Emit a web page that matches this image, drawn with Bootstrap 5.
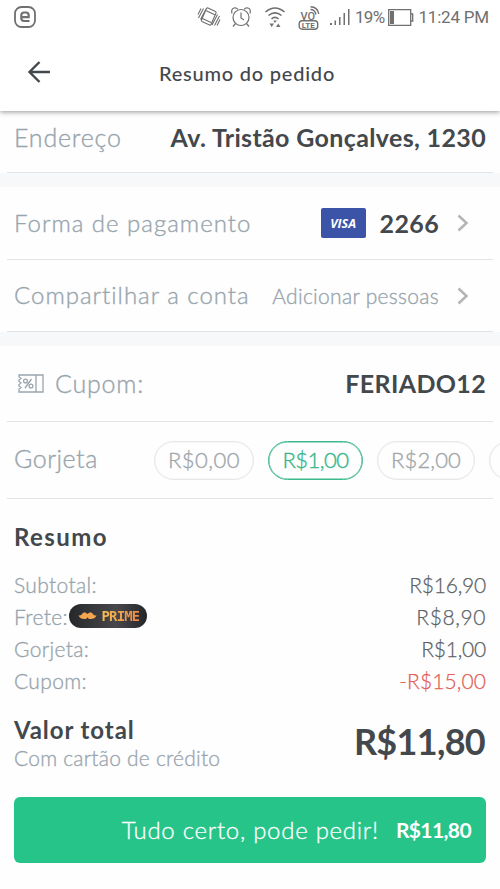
<!DOCTYPE html>
<html lang="pt-BR">
<head>
<meta charset="utf-8">
<meta name="viewport" content="width=device-width, initial-scale=1">
<title>Resumo do pedido</title>
<link href="https://cdn.jsdelivr.net/npm/bootstrap@5.3.0/dist/css/bootstrap.min.css" rel="stylesheet">
<style>
body{font-family:Lato,"Liberation Sans",sans-serif;font-weight:300;color:#43484c;background:#fefefe;line-height:1.2;height:889px}
.status-bar{height:34px;font:400 17px Roboto,sans-serif;color:#707070}
.status-bar svg{display:block;flex:none}
.title-bar{height:77px}
.top-area{background:#fff;box-shadow:0 1px 5px rgba(0,0,0,.42);position:relative;z-index:1}
.page-title{font-size:20px;font-weight:500;letter-spacing:.78px;margin-left:-6px}
.back-icon{left:27px;top:26px}
.line-row{margin:0 7px;padding:0 7px;border-bottom:1px solid #e3e4e6}
.divider-band{height:14px;background:#f7f8fa}
.label-text{font-size:25px;color:#98a5ad;letter-spacing:.8px;white-space:nowrap;-webkit-text-stroke:.35px}
.label-text.compact{font-size:24px;letter-spacing:1px}
.value-text{font-size:25px;font-weight:700;letter-spacing:.35px;white-space:nowrap}
.h-address{height:62px;padding-bottom:10px}
.h-pay{height:73px}
.h-share{height:72px}
.h-coupon{height:76px;padding-bottom:1px}
.h-tip{height:77px}
.chevron{margin:0 17px 0 18px}
.people{font-size:21px;letter-spacing:.3px;color:#98a5ad;-webkit-text-stroke:.35px}
.visa-tag{width:45px;height:30px;border-radius:2px;background:#3b54a8;color:#fff;font:italic 700 12.5px "Open Sans",sans-serif}
.tip-label{width:140px;letter-spacing:.5px;flex:none;padding-bottom:5px}
.tip-pill{height:39px;border:1.6px solid #e6e7e9;border-radius:20px;font-size:22px;color:#a0a6aa;letter-spacing:.5px;flex:none;-webkit-text-stroke:.35px;box-shadow:inset 0 0 0 .5px #eeeff0}
.tip-pill.chosen{border-color:#3dba8c;color:#35b586;letter-spacing:-.5px;box-shadow:inset 0 0 0 .5px #3dba8c}
.tip-pill.w-c{letter-spacing:.1px}
.w-a{width:100px}.w-b{width:95px}.w-c{width:98px}
.tips{gap:14px;margin-right:-14px;flex:1 1 0;min-width:0;overflow:hidden}
.sum-title{font-size:24px;font-weight:700;letter-spacing:1.4px;line-height:30px;margin-bottom:17px}
.sum-row{height:32px;font-size:21px}
.sum-row .key{color:#98a5ad;letter-spacing:.35px;-webkit-text-stroke:.35px}
.sum-row .amount{color:#5b6166;letter-spacing:-.2px;-webkit-text-stroke:.25px}
.sum-row .amount.spaced{letter-spacing:.6px}
.sum-row .amount.discount{color:#e35d55;letter-spacing:.1px}
.prime-tag{width:78px;height:24px;background:linear-gradient(90deg,#25272b,#48484a 60%,#25272b);gap:5px;margin:-2px 0 0 1.5px}
.prime-tag span{font:700 14px "DejaVu Sans Mono",monospace;letter-spacing:-.9px;background:linear-gradient(90deg,#f6bd54,#ef8746);-webkit-background-clip:text;color:transparent}
.total-name{font-size:24px;font-weight:700;letter-spacing:.92px;line-height:28px}
.pay-kind{font-size:21px;color:#9aa6b0;letter-spacing:.22px;line-height:28px;-webkit-text-stroke:.35px}
.total-sum{font-size:36px;font-weight:700;letter-spacing:-.7px;padding:0 1px 4px 0}
.confirm-btn{height:66px;margin:25px 14px 0;background:#26c489;border:0;border-radius:6px;color:#fff;font-weight:300;width:472px;padding:0 15px}
.confirm-btn:hover{background:#26c489;color:#fff}
.confirm-text{font-size:24px;letter-spacing:.72px;-webkit-text-stroke:.3px}
.confirm-sum{font-size:21px;font-weight:700;letter-spacing:-.6px;margin-left:17px}
</style>
<script src="https://cdn.jsdelivr.net/npm/bootstrap@5.3.0/dist/js/bootstrap.bundle.min.js"></script>
</head>
<body>
<header class="top-area">
  <div class="status-bar d-flex align-items-center">
    <svg style="margin-left:14px" width="22" height="22" viewBox="0 0 22 22" fill="none" stroke="#707070"><rect x="1" y="1" width="20" height="20" rx="6.5" stroke-width="1.8"/><path d="M15.500 15H10q-2.700 0-2.700-2.700V9.200q0-2.700 2.700-2.700h2q2.700 0 2.700 2.700v1.900H8" stroke-width="2.200"/></svg>
    <svg class="ms-auto" width="24" height="24" viewBox="0 0 24 24" fill="none" stroke="#707070" stroke-width="1.1"><path d="M11 3 18.500 6.600q.9.500.5 1.400L14 19.500q-.5.900-1.500.5L5 16.400q-.9-.5-.5-1.400L9.500 3.500q.5-.9 1.500-.5ZM9.300 5.800l8.500 4M5.500 13.500l8.500 4M6.500 3.500 1.500 13M4 3.500 1 9.500M17.500 20.500l5-9.500M20 20.500 23 14.500M9 4 3.500 14.500M15 20 20.500 9.500"/></svg>
    <svg style="margin-left:9px" width="22" height="22" viewBox="0 0 22 22" fill="none" stroke="#707070" stroke-width="1.2"><circle cx="11" cy="11.500" r="8"/><path d="M11 6.500v5.500l3 2M5.500 17.500 3 20.500M16.500 17.500l2.500 3M2 7.500Q.8 3 4 2q2.500-.6 4 1.500M20 7.500Q21.200 3 18 2q-2.500-.6-4 1.500"/></svg>
    <svg style="margin-left:12px" width="22" height="22" viewBox="0 0 22 22" fill="none" stroke="#707070" stroke-width="1.600"><path d="M1.500 6Q11-2 20.500 6M4.500 9.500q6.500-5.400 13 0M7.500 12.800q3.500-3 7 0"/><path fill="#707070" stroke="none" d="M9.200 14.500h3.600L11 17ZM5.500 17.500h4.500L7.700 21ZM12 21h4.500l-2.200-3.500Z"/></svg>
    <svg style="margin-left:12px" width="24" height="26" viewBox="0 0 24 26" fill="none" stroke="#707070" stroke-width="1.400"><text x="2.500" y="15.500" font-family="Roboto" font-size="11" font-weight="500" fill="#707070" stroke="none">VO</text><rect x="1.200" y="16.700" width="18.500" height="8.500" rx="3"/><text x="3.800" y="23.900" font-family="Roboto" font-size="8" font-weight="700" fill="#707070" stroke="none">LTE</text><path d="M12.500 5.500q4.500 0 5.500 5M12.500 2.800q7 .2 8.300 7"/></svg>
    <svg style="margin-left:8px" width="21" height="18" viewBox="0 0 21 18" fill="#707070"><path d="M0 15h2v2H0zM4.500 12.500h1.500V17h-1.500zM9 9h1.500v8H9zM13.500 5h1.500v12h-1.500zM18 1h1.500v16H18z"/></svg>
    <span style="margin-left:4px;letter-spacing:-.7px">19%</span>
    <svg style="margin-left:4px" width="26" height="17" viewBox="0 0 26 17"><path d="M.7.700h22v15.600H.7zM22.700 5h2v7h-2" fill="none" stroke="#707070" stroke-width="1.300"/><path d="M2 2h4v13H2z" fill="#707070"/></svg>
    <span style="margin-left:4px;margin-right:11px;letter-spacing:-.2px">11:24 PM</span>
  </div>
  <div class="title-bar position-relative d-flex align-items-center justify-content-center">
    <svg class="back-icon position-absolute" width="24" height="24" viewBox="0 0 24 24" fill="none" stroke="#43484c" stroke-width="2.400"><path d="M23 12H2.500M12.500 2l-10 10 10 10"/></svg>
    <span class="page-title">Resumo do pedido</span>
  </div>
</header>
<main>
  <div class="line-row h-address d-flex align-items-center justify-content-between"><span class="label-text">Endereço</span><span class="value-text">Av. Tristão Gonçalves, 1230</span></div>
  <div class="divider-band"></div>
  <div class="line-row h-pay d-flex align-items-center">
    <span class="label-text compact me-auto">Forma de pagamento</span>
    <span class="visa-tag d-flex align-items-center justify-content-center">VISA</span>
    <span class="value-text" style="margin-left:14px">2266</span>
    <svg class="chevron" width="12" height="18" viewBox="0 0 12 18" fill="none" stroke="#b2b5b7" stroke-width="2.500"><path d="m1.500 1.500 8 7.500-8 7.500"/></svg>
  </div>
  <div class="line-row h-share d-flex align-items-center">
    <span class="label-text compact me-auto">Compartilhar a conta</span>
    <span class="people">Adicionar pessoas</span>
    <svg class="chevron" width="12" height="18" viewBox="0 0 12 18" fill="none" stroke="#b2b5b7" stroke-width="2.500"><path d="m1.500 1.500 8 7.500-8 7.500"/></svg>
  </div>
  <div class="divider-band"></div>
  <div class="line-row h-coupon d-flex align-items-center">
    <svg style="margin:0 11px 0 4px" width="26" height="19" viewBox="0 0 26 19" fill="none" stroke="#98a5ad" stroke-width="1.300"><path d="M1 1h24v17H1v-3l2-1.500L1 12V10.500L3 9 1 7.500V6l2-1.500L1 3ZM18 1v17M13.500 5 7 14"/><circle cx="7.500" cy="7" r="1.900"/><circle cx="13" cy="12" r="1.900"/></svg>
    <span class="label-text me-auto">Cupom:</span><span class="value-text">FERIADO12</span>
  </div>
  <div class="line-row h-tip d-flex align-items-center">
    <span class="label-text tip-label">Gorjeta</span>
    <div class="tips d-flex">
      <span class="tip-pill w-a d-flex align-items-center justify-content-center">R$0,00</span>
      <span class="tip-pill chosen w-b d-flex align-items-center justify-content-center">R$1,00</span>
      <span class="tip-pill w-c d-flex align-items-center justify-content-center">R$2,00</span>
      <span class="tip-pill w-a"></span>
    </div>
  </div>
  <section style="padding:23px 14px 0">
    <div class="sum-title">Resumo</div>
    <div>
      <div class="sum-row d-flex align-items-center justify-content-between"><span class="key">Subtotal:</span><span class="amount">R$16,90</span></div>
      <div class="sum-row d-flex align-items-center justify-content-between">
        <span class="d-flex align-items-center"><span class="key">Frete:</span>
        <span class="prime-tag rounded-pill d-flex align-items-center justify-content-center"><svg width="19" height="8" viewBox="0 0 20 8" fill="#f3a552"><path d="M10 2C8.500-.4 5.500-.3 4.500 1.700 3.500 3.500 2 3.800.5 3.200 2 8 9 8.300 10 5.300c1 3 8 2.700 9.500-2.100-1.500.6-3 .3-4-1.500C14.500-.3 11.500-.4 10 2Z"/></svg><span>PRIME</span></span></span>
        <span class="amount spaced">R$8,90</span></div>
      <div class="sum-row d-flex align-items-center justify-content-between"><span class="key">Gorjeta:</span><span class="amount">R$1,00</span></div>
      <div class="sum-row d-flex align-items-center justify-content-between"><span class="key">Cupom:</span><span class="amount discount">-R$15,00</span></div>
    </div>
    <div class="d-flex justify-content-between align-items-center" style="margin-top:19px">
      <div><div class="total-name">Valor total</div><div class="pay-kind">Com cartão de crédito</div></div>
      <span class="total-sum">R$11,80</span>
    </div>
  </section>
  <button class="btn confirm-btn d-flex align-items-center justify-content-end"><span class="confirm-text">Tudo certo, pode pedir!</span><span class="confirm-sum">R$11,80</span></button>
</main>
</body>
</html>
